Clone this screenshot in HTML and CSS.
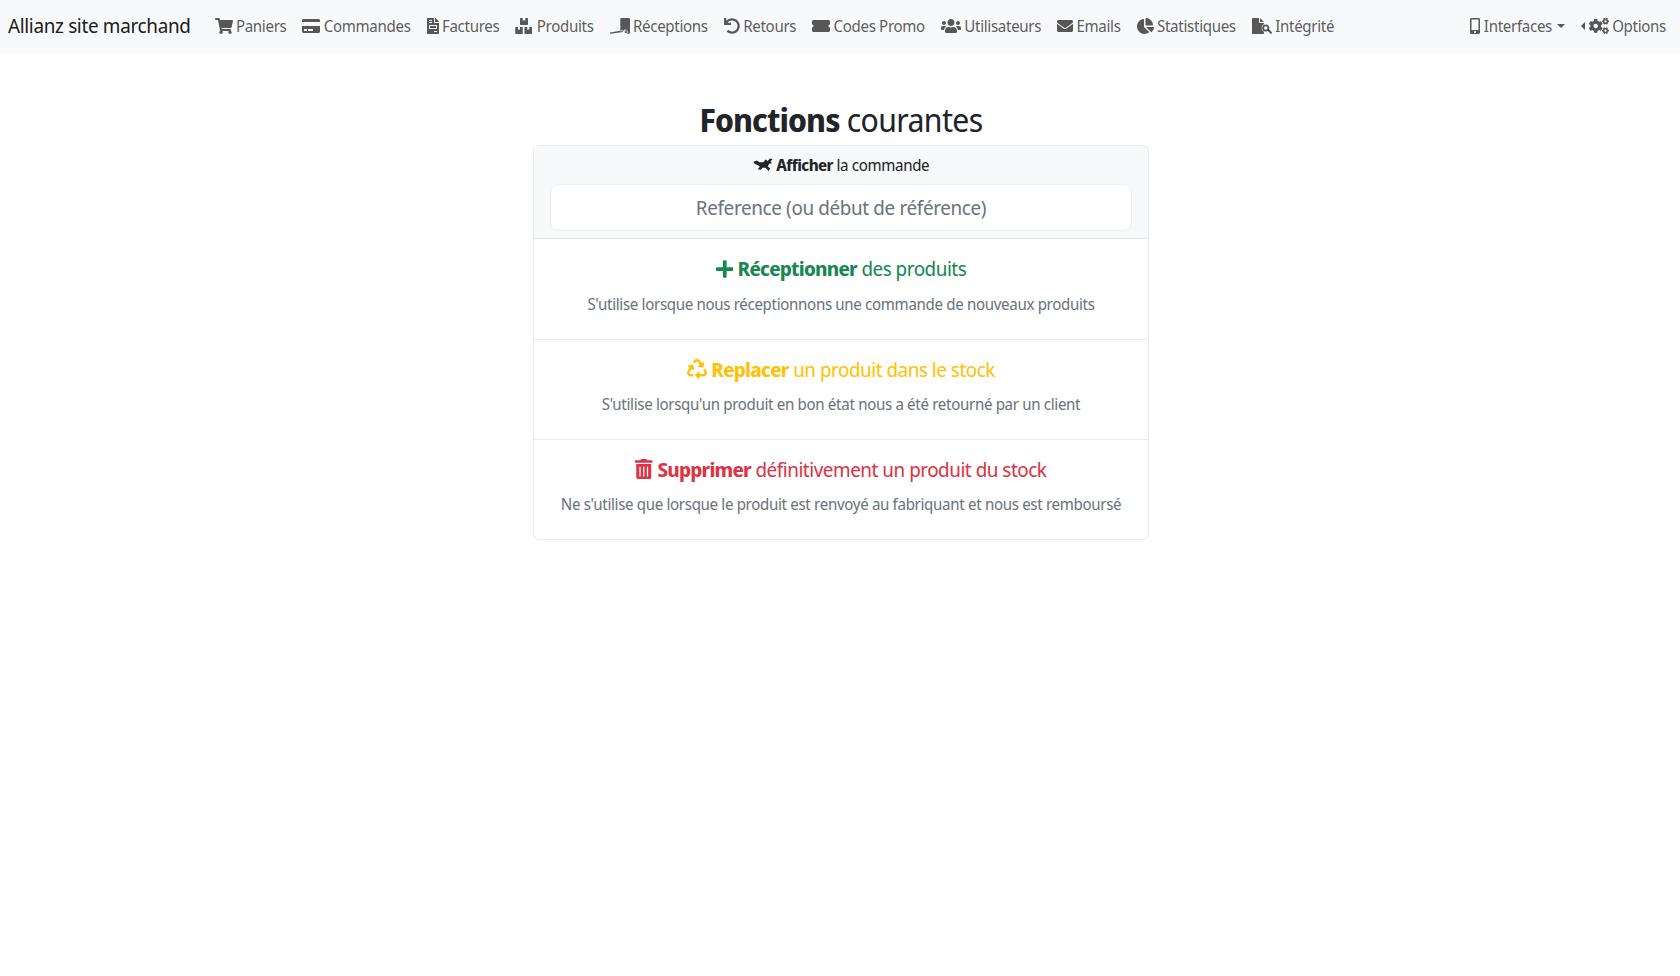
FILE: index.html
```html
<!DOCTYPE html>
<html lang="fr">
<head>
<meta charset="utf-8">
<title>Allianz site marchand</title>
<link rel="stylesheet" href="styles.css">
</head>
<body>
<nav class="navbar">
  <a class="brand">Allianz site marchand</a>
  <ul class="nav">
    <li class="nav-link"><svg class="ic" viewBox="0 0 576 512"><path d="M528 301.300l47.300-208c3.400-15-8-29.300-23.400-29.300H159.300l-9.200-44.800C147.800 8 137.900 0 126.600 0H24C10.700 0 0 10.700 0 24v16c0 13.300 10.700 24 24 24h69.900l70.200 343.400C147.300 417.100 136 435.200 136 456c0 30.900 25.100 56 56 56s56-25.100 56-56c0-15.700-6.400-29.800-16.800-40h209.600C430.400 426.200 424 440.300 424 456c0 30.900 25.100 56 56 56s56-25.100 56-56c0-22.200-12.900-41.300-31.600-50.400l5.500-24.300c3.400-15-8-29.300-23.400-29.300H218.100l-6.500-32h293c11.200 0 20.900-7.800 23.400-18.700z"/></svg> Paniers</li>
    <li class="nav-link"><svg class="ic" viewBox="0 0 576 512"><path d="M0 432c0 26.500 21.500 48 48 48h480c26.500 0 48-21.500 48-48V256H0v176zm192-68c0-6.600 5.400-12 12-12h136c6.600 0 12 5.400 12 12v40c0 6.600-5.400 12-12 12H204c-6.600 0-12-5.400-12-12v-40zm-128 0c0-6.600 5.400-12 12-12h72c6.600 0 12 5.400 12 12v40c0 6.600-5.400 12-12 12H76c-6.600 0-12-5.400-12-12v-40zM576 80v48H0V80c0-26.500 21.500-48 48-48h480c26.500 0 48 21.500 48 48z"/></svg> Commandes</li>
    <li class="nav-link"><svg class="ic" viewBox="0 0 384 512"><path d="M224 136V0H24C10.700 0 0 10.700 0 24v464c0 13.300 10.700 24 24 24h336c13.300 0 24-10.700 24-24V160H248c-13.200 0-24-10.800-24-24zM64 72c0-4.400 3.600-8 8-8h80c4.400 0 8 3.600 8 8v16c0 4.400-3.600 8-8 8H72c-4.400 0-8-3.600-8-8V72zm0 64c0-4.400 3.600-8 8-8h80c4.400 0 8 3.600 8 8v16c0 4.400-3.600 8-8 8H72c-4.400 0-8-3.600-8-8v-16zm256 304c0 4.400-3.600 8-8 8h-80c-4.400 0-8-3.600-8-8v-16c0-4.400 3.600-8 8-8h80c4.400 0 8 3.600 8 8v16zm0-200v96c0 8.800-7.200 16-16 16H80c-8.800 0-16-7.200-16-16v-96c0-8.800 7.200-16 16-16h224c8.800 0 16 7.200 16 16zM377 105L279.100 7c-4.500-4.500-10.600-7-17-7H256v128h128v-6.100c0-6.300-2.500-12.400-7-16.900zM96 256h192v64H96z"/></svg> Factures</li>
    <li class="nav-link"><svg class="ic" viewBox="0 0 576 512"><path d="M528 288h-72v96l-32-21.300-32 21.300v-96h-72c-8.800 0-16 7.200-16 16v192c0 8.800 7.200 16 16 16h208c8.800 0 16-7.200 16-16V304c0-8.800-7.200-16-16-16zM176 224h224c8.800 0 16-7.200 16-16V16c0-8.800-7.200-16-16-16h-72v96l-40-32-40 32V0h-72c-8.800 0-16 7.200-16 16v192c0 8.800 7.200 16 16 16zm56 64h-72v96l-32-21.300L96 384v-96H24c-8.800 0-16 7.200-16 16v192c0 8.800 7.200 16 16 16h208c8.800 0 16-7.200 16-16V304c0-8.800-7.200-16-16-16z"/></svg> Produits</li>
    <li class="nav-link"><svg class="ic" viewBox="0 0 640 512"><path fill-rule="evenodd" d="M330 20c0-11 9-20 20-20h250c22 0 40 18 40 40v420c0 22-18 40-40 40h-60c18-12 30-34 30-56 0-44-36-74-74-74-32 0-60 20-70 48L330 425zM510 395a46 46 0 1 1 0 92 46 46 0 1 1 0-92zm0 28a18 18 0 1 0 0 36 18 18 0 1 0 0-36zM0 462l420-68c-6 14-8 34-2 50L16 506c-10 2-16-4-16-14z"/></svg> Réceptions</li>
    <li class="nav-link"><svg class="ic" viewBox="0 0 512 512"><path d="M212.333 224.333H12c-6.627 0-12-5.373-12-12V12C0 5.373 5.373 0 12 0h48c6.627 0 12 5.373 12 12v78.112C117.773 39.279 184.130 7.470 258.175 8.007c136.906.994 246.448 111.623 246.157 248.532C504.041 393.258 393.120 504 256.333 504c-64.089 0-122.496-24.313-166.510-64.215-5.099-4.622-5.334-12.554-.467-17.420l33.967-33.967c4.474-4.474 11.662-4.717 16.401-.525C170.800 415.336 211.614 432 256.333 432c97.268 0 176-78.716 176-176 0-97.267-78.716-176-176-176-58.496 0-110.286 28.476-142.274 72.333h98.274c6.627 0 12 5.373 12 12v48c0 6.627-5.373 12-12 12z"/></svg> Retours</li>
    <li class="nav-link"><svg class="ic" viewBox="0 0 576 512"><path d="M528 256c0 26.510 21.490 48 48 48v96c0 26.510-21.490 48-48 48H48c-26.510 0-48-21.490-48-48v-96c26.510 0 48-21.490 48-48s-21.490-48-48-48v-96c0-26.510 21.490-48 48-48h480c26.510 0 48 21.490 48 48v96c-26.510 0-48 21.490-48 48z"/></svg> Codes Promo</li>
    <li class="nav-link"><svg class="ic" viewBox="0 0 640 512"><path d="M96 224c35.300 0 64-28.700 64-64s-28.700-64-64-64-64 28.700-64 64 28.700 64 64 64zm448 0c35.300 0 64-28.700 64-64s-28.700-64-64-64-64 28.700-64 64 28.700 64 64 64zm32 32h-64c-17.600 0-33.500 7.100-45.100 18.600 40.300 22.100 68.900 62 75.100 109.400h66c17.700 0 32-14.300 32-32v-32c0-35.300-28.700-64-64-64zm-256 0c61.900 0 112-50.100 112-112S381.900 32 320 32 208 82.100 208 144s50.100 112 112 112zm76.800 32h-8.300c-20.800 10-43.900 16-68.500 16s-47.600-6-68.500-16h-8.300C179.600 288 128 339.600 128 403.200V432c0 26.500 21.500 48 48 48h288c26.500 0 48-21.500 48-48v-28.800c0-63.600-51.600-115.200-115.200-115.200zm-223.700-13.400C161.500 263.100 145.600 256 128 256H64c-35.300 0-64 28.700-64 64v32c0 17.700 14.300 32 32 32h65.900c6.300-47.400 34.900-87.300 75.200-109.400z"/></svg> Utilisateurs</li>
    <li class="nav-link"><svg class="ic" viewBox="0 0 512 512"><path d="M502.300 190.800c3.900-3.100 9.700-.2 9.700 4.700V400c0 26.500-21.500 48-48 48H48c-26.500 0-48-21.500-48-48V195.600c0-5 5.700-7.800 9.700-4.700 22.400 17.400 52.100 39.500 154.100 113.600 21.100 15.400 56.700 47.800 92.200 47.600 35.700.3 72-32.800 92.300-47.600 102-74.100 131.600-96.300 154-113.700zM256 320c23.200.4 56.600-29.200 73.400-41.400 132.700-96.300 142.800-104.700 173.400-128.700 5.800-4.500 9.200-11.500 9.200-18.900v-19c0-26.500-21.500-48-48-48H48C21.500 64 0 85.500 0 112v19c0 7.400 3.400 14.300 9.200 18.900 30.600 23.900 40.700 32.400 173.400 128.700 16.800 12.200 50.200 41.800 73.400 41.400z"/></svg> Emails</li>
    <li class="nav-link"><svg class="ic" viewBox="0 0 544 512"><path d="M527.790 288H290.500l158.030 158.030c6.040 6.040 15.980 6.530 22.190.68 38.700-36.460 65.320-85.610 73.130-140.860 1.340-9.460-6.510-17.850-16.060-17.850zm-15.830-64.800C503.720 103.740 408.260 8.280 288.800.04 279.680-.59 272 7.100 272 16.240V240h223.770c9.140 0 16.820-7.680 16.190-16.800zM224 288V50.710c0-9.550-8.390-17.400-17.840-16.060C86.990 51.490-4.100 155.600.14 280.370 4.500 408.510 114.830 513.590 243.030 511.980c50.400-.63 96.970-16.870 135.260-44.030 7.900-5.600 8.420-17.230 1.570-24.080L224 288z"/></svg> Statistiques</li>
    <li class="nav-link"><svg class="ic" viewBox="0 0 640 512"><path d="M224 136V0H24C10.700 0 0 10.700 0 24v464c0 13.300 10.700 24 24 24h336c13.300 0 24-10.700 24-24V160H248c-13.200 0-24-10.800-24-24zM384 128L256 0v128z"/><circle class="halo" cx="440" cy="320" r="130"/><circle class="lens" cx="440" cy="320" r="85"/><path d="M490 400l45-45 95 95c12 12 12 33 0 45s-33 12-45 0z"/></svg> Intégrité</li>
  </ul>
  <ul class="nav nav-end">
    <li class="nav-link"><svg class="ic" viewBox="0 0 320 512"><path d="M272 0H48C21.500 0 0 21.500 0 48v416c0 26.500 21.500 48 48 48h224c26.500 0 48-21.500 48-48V48c0-26.500-21.500-48-48-48zM160 480c-17.700 0-32-14.300-32-32s14.300-32 32-32 32 14.300 32 32-14.300 32-32 32zm112-108c0 6.600-5.400 12-12 12H60c-6.600 0-12-5.400-12-12V60c0-6.600 5.400-12 12-12h200c6.600 0 12 5.400 12 12v312z"/></svg> Interfaces<span class="caret"></span></li>
    <li class="nav-link"><span class="caret-left"></span><svg class="ic" viewBox="0 0 640 512"><path d="M512.100 191l-8.200 14.300c-3 5.300-9.400 7.500-15.100 5.400-11.800-4.400-22.600-10.700-32.100-18.600-4.600-3.800-5.800-10.500-2.800-15.700l8.200-14.300c-6.900-8-12.300-17.300-15.900-27.400h-16.500c-6 0-11.200-4.300-12.200-10.300-2-12-2.100-24.600 0-37.100 1-6 6.200-10.400 12.200-10.400h16.500c3.600-10.100 9-19.400 15.900-27.400l-8.200-14.300c-3-5.200-1.900-11.900 2.800-15.700 9.500-7.900 20.400-14.200 32.100-18.600 5.700-2.100 12.100.1 15.100 5.400l8.200 14.300c10.500-1.900 21.200-1.900 31.700 0L552 6.300c3-5.300 9.400-7.500 15.100-5.400 11.800 4.400 22.600 10.700 32.100 18.600 4.600 3.800 5.800 10.500 2.800 15.700l-8.200 14.300c6.900 8 12.300 17.300 15.900 27.400h16.500c6 0 11.200 4.300 12.200 10.300 2 12 2.100 24.600 0 37.100-1 6-6.200 10.400-12.200 10.400h-16.500c-3.600 10.100-9 19.400-15.900 27.400l8.200 14.300c3 5.200 1.900 11.900-2.800 15.700-9.500 7.900-20.400 14.200-32.100 18.600-5.700 2.100-12.100-.1-15.100-5.400l-8.200-14.300c-10.400 1.900-21.200 1.900-31.700 0zm-10.500-58.800c38.500 29.600 82.400-14.300 52.800-52.800-38.500-29.700-82.400 14.300-52.800 52.800zM386.300 286.100l33.700 16.800c10.100 5.800 14.500 18.100 10.500 29.100-8.900 24.200-26.400 46.400-42.600 65.800-7.400 8.900-20.200 11.100-30.300 5.300l-29.100-16.800c-16 13.700-34.600 24.600-54.900 31.700v33.600c0 11.600-8.300 21.600-19.700 23.600-24.600 4.200-50.400 4.400-75.900 0-11.500-2-20-11.900-20-23.600V418c-20.300-7.200-38.900-18-54.900-31.700L74 403c-10 5.800-22.900 3.600-30.300-5.300-16.200-19.400-33.300-41.600-42.200-65.700-4-10.900.4-23.200 10.500-29.100l33.300-16.800c-3.900-20.900-3.900-42.400 0-63.400L12 205.800c-10.100-5.800-14.600-18.100-10.500-29 8.900-24.200 26-46.400 42.200-65.800 7.400-8.900 20.200-11.100 30.300-5.300l29.100 16.800c16-13.700 34.600-24.600 54.900-31.700V57.100c0-11.500 8.200-21.500 19.600-23.500 24.600-4.200 50.500-4.400 76-.1 11.500 2 20 11.900 20 23.600v33.600c20.300 7.200 38.900 18 54.900 31.700l29.100-16.800c10-5.800 22.900-3.600 30.300 5.300 16.200 19.400 33.200 41.600 42.100 65.800 4 10.900.1 23.200-10 29.100l-33.700 16.800c3.900 21 3.900 42.500 0 63.500zm-117.600 21.100c59.200-77-28.700-164.900-105.700-105.700-59.200 77 28.700 164.900 105.700 105.700zm243.400 182.700l-8.200 14.300c-3 5.300-9.400 7.500-15.100 5.400-11.800-4.400-22.600-10.700-32.100-18.600-4.600-3.800-5.800-10.500-2.800-15.700l8.200-14.300c-6.900-8-12.300-17.300-15.900-27.400h-16.500c-6 0-11.200-4.300-12.200-10.300-2-12-2.100-24.600 0-37.100 1-6 6.200-10.400 12.200-10.400h16.500c3.600-10.100 9-19.400 15.900-27.400l-8.200-14.300c-3-5.200-1.900-11.900 2.800-15.700 9.500-7.900 20.400-14.200 32.100-18.600 5.700-2.100 12.100.1 15.100 5.400l8.200 14.300c10.500-1.900 21.200-1.900 31.700 0l8.200-14.300c3-5.300 9.400-7.500 15.100-5.400 11.800 4.400 22.600 10.700 32.100 18.600 4.600 3.800 5.800 10.500 2.800 15.700l-8.200 14.300c6.900 8 12.300 17.300 15.900 27.400h16.500c6 0 11.200 4.300 12.200 10.300 2 12 2.100 24.600 0 37.100-1 6-6.200 10.400-12.200 10.400h-16.500c-3.600 10.100-9 19.400-15.900 27.400l8.200 14.300c3 5.200 1.900 11.900-2.800 15.700-9.500 7.900-20.400 14.200-32.100 18.600-5.700 2.100-12.100-.1-15.100-5.400l-8.200-14.300c-10.400 1.900-21.200 1.900-31.700 0zM501.600 431c38.500 29.600 82.400-14.300 52.800-52.800-38.500-29.600-82.400 14.300-52.800 52.800z"/></svg> Options</li>
  </ul>
</nav>
<main class="main">
  <h1 class="title"><b>Fonctions</b> courantes</h1>
  <section class="card">
    <header class="card-head">
      <div class="head-label"><svg class="ic" viewBox="0 0 640 512"><path d="M10 150L130 110 200 170 330 170 400 80 470 130 540 50 630 60 560 140 610 200 520 215 470 300 550 360 500 450 400 340 300 340 260 410 150 390 220 300 130 250 60 220z"/></svg> <b>Afficher</b> la commande</div>
      <input class="ref-input" type="text" placeholder="Reference (ou début de référence)">
    </header>
    <a class="item">
      <h2 class="item-title green"><svg class="ic" viewBox="0 0 448 512"><path d="M416 208H272V64c0-17.670-14.330-32-32-32h-32c-17.670 0-32 14.330-32 32v144H32c-17.670 0-32 14.330-32 32v32c0 17.670 14.330 32 32 32h144v144c0 17.670 14.330 32 32 32h32c17.670 0 32-14.330 32-32V304h144c17.670 0 32-14.330 32-32v-32c0-17.670-14.330-32-32-32z"/></svg> <b>Réceptionner</b> des produits</h2>
      <p class="item-text">S'utilise lorsque nous réceptionnons une commande de nouveaux produits</p>
    </a>
    <a class="item">
      <h2 class="item-title yellow"><svg class="ic" viewBox="0 0 512 512"><path d="M184.561 261.903c3.232 13.997-12.123 24.635-24.068 17.168l-40.736-25.455-50.867 81.402C55.606 356.273 70.760 384 96.012 384H148c6.627 0 12 5.373 12 12v40c0 6.627-5.373 12-12 12H96.115c-75.334 0-121.302-83.048-81.408-146.880l50.822-81.388-40.725-25.448c-12.081-7.547-8.966-25.961 4.879-29.158l110.237-25.450c8.611-1.988 17.201 3.381 19.189 11.990l25.452 110.237zm98.561-182.915l41.289 66.110-40.746 25.470c-12.051 7.530-9 25.950 4.900 29.160l110.260 25.450c8.590 1.980 17.210-3.350 19.180-11.990l25.470-110.260c3.210-13.880-12.060-24.660-24.080-17.180l-40.670 25.430-41.290-66.140c-37.520-60.090-125.270-60.210-162.880 0l-17.810 28.510c-3.520 5.620-1.800 13.020 3.810 16.530l33.920 21.190c5.620 3.510 13.020 1.800 16.530-3.810l17.810-28.490c12.570-20.110 41.840-19.970 54.300.020zM497.288 301.120l-27.590-44.180c-3.510-5.620-10.910-7.330-16.530-3.820l-33.880 21.160c-5.620 3.510-7.330 10.910-3.820 16.530l27.640 44.190c13.300 21.310-2.060 48.990-27.160 48.990H320v-48c0-14.210-17.260-21.420-27.310-11.310l-80 80c-6.250 6.240-6.250 16.370 0 22.620l80 80c10.020 10.020 27.310 2.950 27.310-11.310v-48h95.820c75.280 0 121.340-82.970 81.470-146.880z"/></svg> <b>Replacer</b> un produit dans le stock</h2>
      <p class="item-text">S'utilise lorsqu'un produit en bon état nous a été retourné par un client</p>
    </a>
    <a class="item">
      <h2 class="item-title red"><svg class="ic" viewBox="0 0 448 512"><path d="M32 464a48 48 0 0 0 48 48h288a48 48 0 0 0 48-48V128H32zm272-256a16 16 0 0 1 32 0v224a16 16 0 0 1-32 0zm-96 0a16 16 0 0 1 32 0v224a16 16 0 0 1-32 0zm-96 0a16 16 0 0 1 32 0v224a16 16 0 0 1-32 0zM432 32H312l-9.400-18.700A24 24 0 0 0 281.100 0H166.800a23.720 23.720 0 0 0-21.400 13.300L136 32H16A16 16 0 0 0 0 48v32a16 16 0 0 0 16 16h416a16 16 0 0 0 16-16V48a16 16 0 0 0-16-16z"/></svg> <b>Supprimer</b> définitivement un produit du stock</h2>
      <p class="item-text">Ne s'utilise que lorsque le produit est renvoyé au fabriquant et nous est remboursé</p>
    </a>
  </section>
</main>
</body>
</html>
```
FILE: styles.css
```css
* { box-sizing: border-box; }
html, body { margin: 0; padding: 0; }
body {
  font-family: "Noto Sans Display", "Noto Sans", sans-serif;
  font-size: 16px;
  line-height: 1.5;
  letter-spacing: -.021em;
  color: #212529;
  background: #fff;
}
b { letter-spacing: -.037em; }
.navbar {
  display: flex;
  align-items: center;
  height: 54px;
  padding: 0 6px 2px 8px;
  background: #f8f9fa;
}
.brand {
  font-size: 20px;
  margin-right: 16px;
  color: rgba(0, 0, 0, .9);
}
.nav { display: flex; list-style: none; margin: 0; padding: 0; }
.nav-end { margin-left: auto; }
.nav-link { padding: 8px; color: rgba(0, 0, 0, .65); white-space: nowrap; display: flex; align-items: center; gap: 3.4px; }
.ic { height: 1em; width: auto; fill: currentColor; vertical-align: -.125em; }
.halo { fill: #f8f9fa; }
.lens { fill: none; stroke: currentColor; stroke-width: 60; }
.caret {
  display: inline-block;
  border-top: 4.8px solid currentColor;
  border-left: 4.8px solid transparent;
  border-right: 4.8px solid transparent;
  margin-left: 2px;
}
.caret-left {
  display: inline-block;
  border-right: 4.8px solid currentColor;
  border-top: 4.8px solid transparent;
  border-bottom: 4.8px solid transparent;
}
.main { width: 618px; margin: 0 auto; padding: 47px 0 0 2px; }
.title {
  font-size: 32px;
  font-weight: 400;
  line-height: 1.2;
  letter-spacing: -.02em;
  text-align: center;
  margin: 0 0 6px;
}
.title b { letter-spacing: -.028em; }
.card {
  border: 1px solid rgba(0, 0, 0, .08);
  border-radius: 6px;
  overflow: hidden;
}
.card-head {
  background: #f8f9fa;
  padding: 7px 16px;
  text-align: center;
  border-bottom: 1px solid rgba(0, 0, 0, .08);
}
.head-label { margin-bottom: 7px; }
.ref-input {
  display: block;
  width: 100%;
  height: 47px;
  font-family: inherit;
  font-size: 20px;
  letter-spacing: -.018em;
  text-align: center;
  border: 1px solid #eceef0;
  border-radius: 8px;
  background: #fff;
  padding: 8px 16px;
}
.ref-input::placeholder { color: #6c757d; opacity: 1; }
.item {
  display: block;
  padding: 18px 16px 22.8px;
  text-align: center;
  border-bottom: 1px solid rgba(0, 0, 0, .08);
}
.item:last-child { border-bottom: 0; }
.item-title { font-size: 20px; font-weight: 400; line-height: 1.2; margin: 0 0 10.5px; letter-spacing: -.024em; }
.item-title b { letter-spacing: -.037em; }
.item-text { margin: 0; color: #6c757d; }
.green { color: #198754; }
.yellow { color: #ffc107; }
.red { color: #dc3545; }
```
